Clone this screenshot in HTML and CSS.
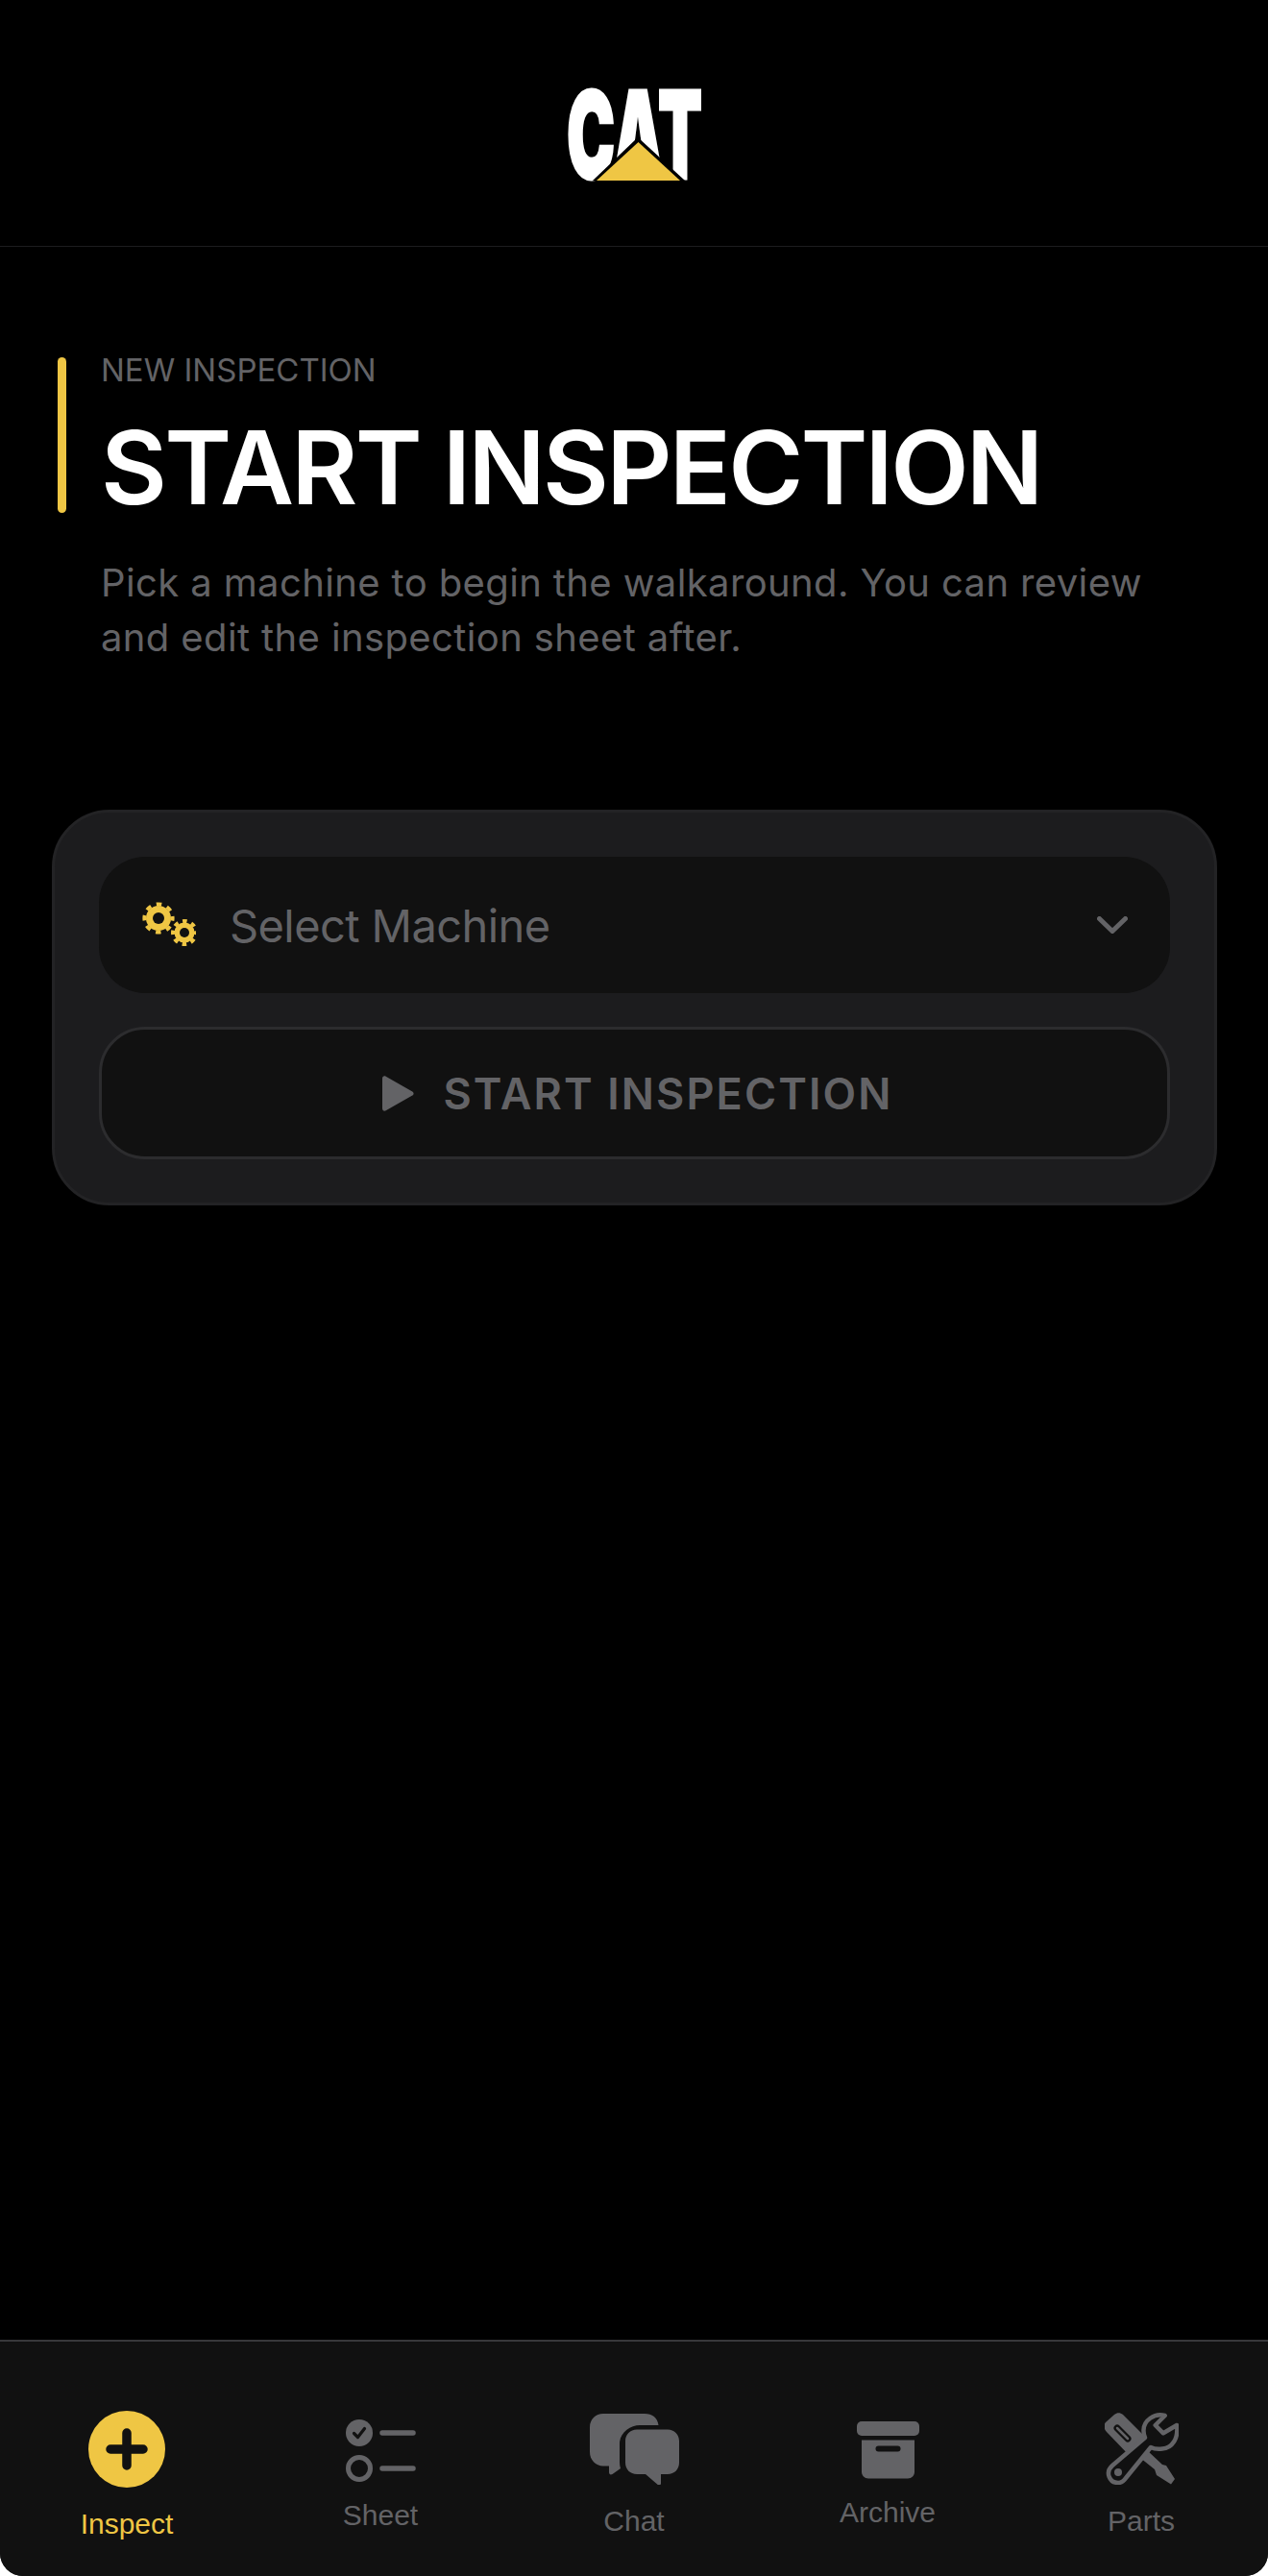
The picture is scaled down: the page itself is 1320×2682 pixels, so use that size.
FILE: index.html
```html
<!DOCTYPE html>
<html>
	<head>
		<meta charset="UTF-8">
		<title>Start Inspection</title>
		<link rel="stylesheet" href="styles.css">
	</head>
	<body>
		<div class="app">
			<header class="top">
				<svg class="logo" viewBox="-6 -6 155 107">
					<text class="logo-text" x="1" y="93" textLength="141" lengthAdjust="spacingAndGlyphs">CAT</text>
					<polygon points="75,50 28,95 124,95" fill="#000"/>
					<polygon points="75.5,55 32,95 119,95" fill="#efc644"/>
				</svg>
			</header>

			<main class="content">
				<section class="intro">
					<p class="eyebrow">NEW INSPECTION</p>
					<h1 class="title">START INSPECTION</h1>
					<p class="lead">Pick a machine to begin the walkaround. You can review and edit the inspection sheet after.</p>
				</section>

				<section class="card">
					<div class="select">
						<svg class="gears" viewBox="0 0 58 48">
							<g fill="#efc644">
								<circle cx="19" cy="17" r="13"/>
								<circle cx="19" cy="17" r="14.6" fill="none" stroke="#efc644" stroke-width="4" stroke-dasharray="5.5 5.97" stroke-dashoffset="2.7"/>
								<circle cx="46" cy="32" r="10.5"/>
								<circle cx="46" cy="32" r="12" fill="none" stroke="#efc644" stroke-width="4" stroke-dasharray="4.6 4.82" stroke-dashoffset="2.3"/>
							</g>
							<circle cx="19" cy="17" r="6" fill="#111"/>
							<circle cx="46" cy="32" r="5" fill="#111"/>
						</svg>
						<span class="select-label">Select Machine</span>
						<svg class="chevron" viewBox="0 0 32 18"><path d="M2.5 2.5 16 15.5 29.5 2.5" fill="none" stroke="#636366" stroke-width="5" stroke-linecap="round" stroke-linejoin="round"/></svg>
					</div>
					<div class="start-btn">
						<svg class="play" viewBox="0 0 33 37"><path d="M0 3v31c0 2.200 1.800 3.400 3.700 2.300l27.600-15.700c1.700-1 1.700-3.300 0-4.200L3.700.7C1.800-.4 0 .8 0 3z" fill="#636366"/></svg>
						<span>START INSPECTION</span>
					</div>
				</section>
			</main>

			<nav class="tabs">
				<div class="tab tab-active tab-wide">
					<svg class="ico-inspect" viewBox="0 0 80 80">
						<circle cx="40" cy="40" r="40" fill="#efc644"/>
						<path d="M40 23v34M23 40h34" stroke="#111" stroke-width="9.500" stroke-linecap="round"/>
					</svg>
					<span>Inspect</span>
				</div>
				<div class="tab">
					<svg class="ico-sheet" viewBox="0 0 73 65">
						<circle cx="14" cy="14" r="14" fill="#636366"/>
						<path d="M8.500 14.500l4 4 7-9" fill="none" stroke="#111" stroke-width="3.200" stroke-linecap="round" stroke-linejoin="round"/>
						<circle cx="14" cy="51" r="11.500" fill="none" stroke="#636366" stroke-width="5"/>
						<path d="M38 14h32M38 51h32" stroke="#636366" stroke-width="5.500" stroke-linecap="round"/>
					</svg>
					<span>Sheet</span>
				</div>
				<div class="tab tab-wide">
					<svg class="ico-chat" viewBox="0 0 93 74">
						<path d="M14 0h43c8 0 13.500 4 14.500 12H52c-10 0-21 8-21 19v19c0 3 .5 5 1 7l-8.500 6c-2 1.200-3.500 0-3.500-2V54.500H14C6 54.500 0 48 0 40V14C0 6 6 0 14 0z" fill="#636366"/>
						<path d="M49 16.500h32c7 0 12 5 12 12V51c0 7-5 12-12 12h-7v9.500c0 1.800-2 2.500-3.500 1.200L58 63h-9c-7 0-12-5-12-12V28.500c0-7 5-12 12-12z" fill="#636366"/>
					</svg>
					<span>Chat</span>
				</div>
				<div class="tab">
					<svg class="ico-archive" viewBox="0 0 65 60">
						<rect width="65" height="15" rx="5" fill="#636366"/>
						<path d="M5 19.500h55v33c0 4-3 7-7 7H12c-4 0-7-3-7-7z" fill="#636366"/>
						<rect x="19.500" y="25.500" width="26" height="6" rx="3" fill="#111"/>
					</svg>
					<span>Archive</span>
				</div>
				<div class="tab tab-wide">
					<svg class="ico-parts" viewBox="0 0 77 75">
						<path d="M1 10 10 2c3-2.500 6-2.500 9 0l26 26-18 18L2 20c-3-3-3.500-7-1-10z" fill="#636366"/>
						<path d="M45 40 60 54l4 1 9 14-4 5.500L54 65l-2-6-15-12z" fill="#636366"/>
						<path d="M13 16l11 11" stroke="#111" stroke-width="7" stroke-linecap="round"/>
						<path d="M13 16l11 11" stroke="#636366" stroke-width="2.500" stroke-linecap="round"/>
						<path d="M62.700 3C52 0 40 8 40.500 19c0 3 .5 5 1.500 7L8 55c-8 7-3 18 6 18 4 0 6-2 8-5l26-32c4 2 8 2 12 1.500 10-.5 17-10.500 15-24.500L61 21.300 52.700 13z" fill="#111" stroke="#636366" stroke-width="4.500" stroke-linejoin="round"/>
						<circle cx="14" cy="62" r="4" fill="#636366"/>
					</svg>
					<span>Parts</span>
				</div>
			</nav>
		</div>
	</body>
</html>
```

FILE: styles.css
```css
html, body {
	margin: 0;
	background: #fff;
}
p, h1 {
	margin: 0;
}
svg {
	display: block;
}
.app {
	width: 1320px;
	height: 2682px;
	display: flex;
	flex-direction: column;
	overflow: hidden;
	background: #000;
	border-radius: 0 0 24px 24px;
	font-family: Inter, "Liberation Sans", sans-serif;
}
.top {
	height: 257px;
	flex-shrink: 0;
	box-sizing: border-box;
	padding-top: 87px;
	border-bottom: 1px solid #1c1c1e;
}
.logo {
	width: 155px;
	height: 107px;
	margin: 0 auto;
}
.logo-text {
	font-family: Inter, sans-serif;
	font-weight: 900;
	font-size: 126px;
	fill: #fff;
	stroke: #fff;
	stroke-width: 3px;
}
.content {
	flex: 1;
	padding: 115px 53px 0 54px;
}
.intro {
	padding: 0 30px 0 45px;
	margin: 0 0 151px 6px;
	position: relative;
}
.intro::before {
	content: "";
	position: absolute;
	left: 0;
	top: 0;
	width: 9px;
	height: 162px;
	border-radius: 5px;
	background: #efc644;
}
.eyebrow {
	font-size: 33px;
	line-height: 26px;
	color: #636366;
}
.title {
	font-size: 106px;
	line-height: 112px;
	font-weight: 600;
	letter-spacing: -2.800px;
	color: #fff;
	margin-top: 33px;
}
.lead {
	font-size: 40px;
	letter-spacing: .38px;
	line-height: 57px;
	color: #636366;
	margin-top: 35px;
}
.card {
	box-sizing: border-box;
	height: 412px;
	padding: 46px 46px 0;
	background: #1c1c1e;
	border: 3px solid #232325;
	border-radius: 60px;
}
.select {
	height: 142px;
	display: flex;
	align-items: center;
	padding: 0 40px 0 43px;
	background: #111;
	border-radius: 48px;
}
.gears {
	width: 58px;
	height: 48px;
}
.select-label {
	flex: 1;
	margin-left: 35px;
	font-size: 47px;
	letter-spacing: -.6px;
	color: #636366;
}
.chevron {
	width: 32px;
	height: 18px;
	margin-right: 4px;
}
.start-btn {
	box-sizing: border-box;
	height: 138px;
	margin-top: 35px;
	padding-left: 7px;
	display: flex;
	align-items: center;
	justify-content: center;
	gap: 30px;
	background: #111;
	border: 3px solid #2c2c2e;
	border-radius: 48px;
	font-size: 45px;
	font-weight: 600;
	letter-spacing: 2.100px;
	color: #636366;
}
.play {
	width: 33px;
	height: 37px;
}
.tabs {
	height: 246px;
	flex-shrink: 0;
	box-sizing: border-box;
	padding-top: 34px;
	display: grid;
	grid-template-columns: repeat(5, 1fr);
	background: #111;
	border-top: 2px solid #38383a;
	font-family: "Liberation Sans", Arial, sans-serif;
	font-size: 30px;
	color: #636366;
}
.tab {
	display: flex;
	flex-direction: column;
	align-items: center;
	justify-content: center;
	gap: 18px;
}
.tab-wide {
	gap: 21px;
}
.tab-active {
	color: #efc644;
}
.ico-inspect {
	width: 80px;
	height: 80px;
}
.ico-sheet {
	width: 73px;
	height: 65px;
}
.ico-chat {
	width: 93px;
	height: 74px;
}
.ico-archive {
	width: 65px;
	height: 60px;
}
.ico-parts {
	width: 77px;
	height: 75px;
}
```
